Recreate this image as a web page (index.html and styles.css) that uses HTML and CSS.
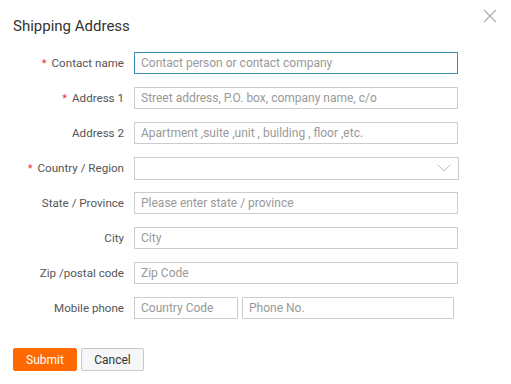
FILE: index.html
```html
<!DOCTYPE html>
<html lang="en">
<head>
  <meta charset="UTF-8">
  <title>Shipping Address</title>
  <link rel="stylesheet" href="styles.css">
</head>
<body>
  <div class="dialog">
    <!-- Header -->
    <div class="header">
      <div class="title">Shipping Address</div>
      <svg class="close" width="14" height="14" viewBox="0 0 14 14">
        <path d="M1 1 L13 13 M13 1 L1 13" stroke="#aaa" stroke-width="1.1" fill="none"/>
      </svg>
    </div>

    <!-- Form -->
    <form class="form">
      <div class="row">
        <label class="label"><span class="req">*</span>Contact name</label>
        <input class="field focus" placeholder="Contact person or contact company">
      </div>
      <div class="row">
        <label class="label"><span class="req">*</span>Address 1</label>
        <input class="field" placeholder="Street address, P.O. box, company name, c/o">
      </div>
      <div class="row">
        <label class="label">Address 2</label>
        <input class="field" placeholder="Apartment ,suite ,unit , building , floor ,etc.">
      </div>
      <div class="row">
        <label class="label"><span class="req">*</span>Country / Region</label>
        <div class="field select">
          <svg width="14" height="8" viewBox="0 0 14 8">
            <path d="M0.5 0.5 L7 7 L13.5 0.5" stroke="#bbb" stroke-width="1" fill="none"/>
          </svg>
        </div>
      </div>
      <div class="row">
        <label class="label">State / Province</label>
        <input class="field" placeholder="Please enter state / province">
      </div>
      <div class="row">
        <label class="label">City</label>
        <input class="field" placeholder="City">
      </div>
      <div class="row">
        <label class="label">Zip /postal code</label>
        <input class="field" placeholder="Zip Code">
      </div>
      <div class="row">
        <label class="label">Mobile phone</label>
        <div class="phone">
          <input class="field code" placeholder="Country Code">
          <input class="field number" placeholder="Phone No.">
        </div>
      </div>

      <div class="actions">
        <button type="button" class="btn submit">Submit</button>
        <button type="button" class="btn cancel">Cancel</button>
      </div>
    </form>
  </div>
</body>
</html>
```

FILE: styles.css
```css
/* Page */
body {
  margin: 0;
  background: #fff;
  font-family: Roboto, "Liberation Sans", sans-serif;
  color: #333;
}

.dialog {
  padding: 0 13px;
  width: 511px;
  box-sizing: border-box;
}

/* Header */
.header {
  display: flex;
  justify-content: space-between;
  align-items: flex-start;
  height: 52px;
}

.title {
  font-size: 15px;
  margin-top: 17px;
  color: #333;
}

.close {
  margin-top: 9px;
  margin-right: 1px;
}

/* Form rows */
.form {
  display: flex;
  flex-direction: column;
  gap: 13px;
}

.row {
  display: flex;
  align-items: center;
  height: 22px;
}

.label {
  width: 111px;
  margin-right: 10px;
  text-align: right;
  font-size: 11.6px;
  color: #555;
}

.req {
  color: #e4393c;
  margin-right: 5px;
  font-size: 11px;
}

.field {
  width: 324px;
  height: 22px;
  box-sizing: border-box;
  border: 1px solid #ccc;
  padding: 0 6px;
  font-family: Roboto, "Liberation Sans", sans-serif;
  font-size: 12px;
  color: #333;
  outline: none;
  margin: 0;
}

.field::placeholder {
  color: #999;
}

.field.focus {
  border-color: #3f8fb8;
}

.select {
  width: 325px;
  height: 23px;
  display: flex;
  align-items: center;
  justify-content: flex-end;
  padding-right: 7px;
}

.phone {
  display: flex;
  gap: 4px;
}

.code {
  width: 104px;
}

.number {
  width: 212px;
}

/* Buttons */
.actions {
  display: flex;
  gap: 4px;
  margin-top: 16px;
}

.btn {
  height: 23px;
  font-family: Roboto, "Liberation Sans", sans-serif;
  font-size: 12px;
  border-radius: 2px;
  padding: 0;
  cursor: pointer;
}

.submit {
  width: 64px;
  background: #ff6a00;
  border: 1px solid #ff6a00;
  color: #fff;
}

.cancel {
  width: 63px;
  background: #f5f6f8;
  border: 1px solid #c6c9cf;
  color: #333;
}
```
